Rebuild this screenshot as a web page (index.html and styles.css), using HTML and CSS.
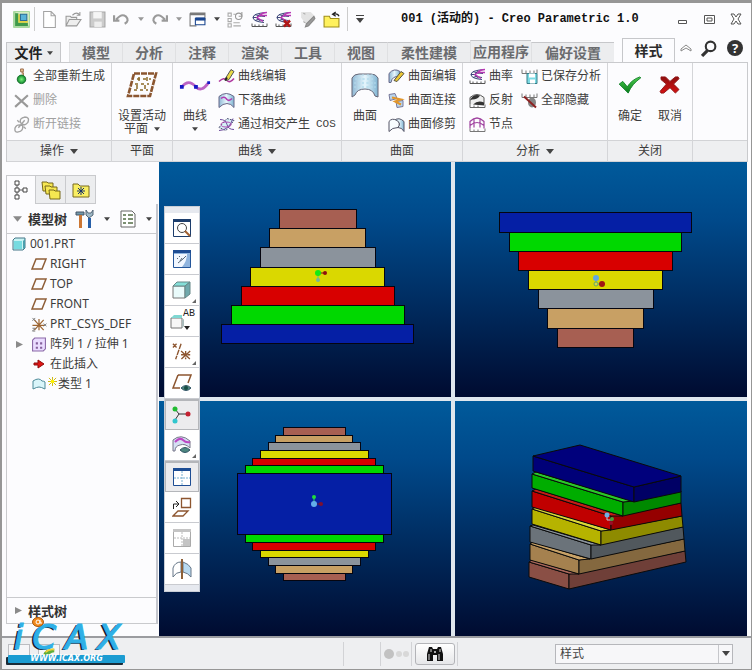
FILE: index.html
```html
<!DOCTYPE html>
<html lang="zh-CN">
<head>
<meta charset="utf-8">
<title>001 (活动的) - Creo Parametric 1.0</title>
<link rel="stylesheet" href="styles.css">
</head>
<body>
<svg class="defs" aria-hidden="true">
  <defs>
    <linearGradient id="surf" x1="0" x2="1"><stop offset="0" stop-color="#8fb8d4"/><stop offset=".5" stop-color="#e6f6fd"/><stop offset="1" stop-color="#7fb4d2"/></linearGradient>
    <linearGradient id="tick" x1="0" y1="0" x2="0" y2="1"><stop offset="0" stop-color="#4fd04f"/><stop offset="1" stop-color="#067a18"/></linearGradient>
    <linearGradient id="cross" x1="0" y1="0" x2="0" y2="1"><stop offset="0" stop-color="#8e0f0f"/><stop offset="1" stop-color="#d41212"/></linearGradient>
    <radialGradient id="ball"><stop offset="0" stop-color="#7df07d"/><stop offset="1" stop-color="#0d8a2c"/></radialGradient>
  </defs>
  <symbol id="down" viewBox="0 0 8 5"><path d="M0 0h8L4 5z" fill="currentColor"/></symbol>
  <symbol id="right" viewBox="0 0 8 8"><path d="M0 0v8l8-4z" fill="#8a8a8a"/></symbol>
  <symbol id="app" viewBox="0 0 16 16"><rect width="16" height="16" rx="1" fill="#a9d8a0"/><path d="M2 1h13v13z" fill="#d6edc0"/><path d="M2 2v12h12v-3H5V2z" fill="#3f9a4a"/><path d="M5 3v8h9V9H7V3z" fill="#e2d13e"/><path d="M7 3h6v6H7z" fill="#58b3d8" stroke="#2b6c96"/></symbol>
  <symbol id="new" viewBox="0 0 16 16"><path d="M2.500 .500h7l4 4v11h-11zM9.500.500v4h4" fill="#fff" stroke="#a3a3a3"/></symbol>
  <symbol id="open" viewBox="0 0 16 16"><path d="M1 14V5h4l1 1h5v2M1 14l3-6h11l-4 6z" fill="#eee" stroke="#999"/><path d="M7 4q4-4 7 0M14 1v3h-3" fill="none" stroke="#999"/></symbol>
  <symbol id="save" viewBox="0 0 16 16"><path d="M1 1h14v14H1z" fill="#ccc" stroke="#a5a5a5"/><path d="M4 1h8v6H4z" fill="#f5f5f5"/><path d="M5 10h7v5H5z" fill="#eee"/></symbol>
  <symbol id="undo" viewBox="0 0 16 12"><path d="M3 6q5-6 9-3 4 4-1 7M1 2v5h5" fill="none" stroke="#9a9a9a" stroke-width="2"/></symbol>
  <symbol id="redo" viewBox="0 0 16 12"><path d="M13 6Q8 0 4 3 0 7 5 10M15 2v5h-5" fill="none" stroke="#9a9a9a" stroke-width="2"/></symbol>
  <symbol id="windows" viewBox="0 0 16 14"><path d="M1 1h14v7M1 1v12h6" fill="none" stroke="#777"/><path d="M1 1h14v2H1z" fill="#777"/><path d="M6 6h9v6H6z" fill="#fff" stroke="#1a4690"/><path d="M6 5h9v3H6z" fill="#1a4690"/></symbol>
  <symbol id="list" viewBox="0 0 16 16"><path d="M1 2h3v3H1zM1 7h3v3H1zM1 12h3v3H1z" fill="none" stroke="#aaa"/><path d="M6 14h7M6 11h6M6 3h2" stroke="#aaa"/><circle cx="11" cy="5" r="3" fill="none" stroke="#999"/><path d="M14 1v4h-3" fill="none" stroke="#999"/></symbol>
  <symbol id="curv" viewBox="0 0 17 16"><path d="M15 1Q2 2 2 6t11 5M14 5Q7 4 6 6t7 3M9 2 6 6l3 4M2 6h4M4 3l3 1M4 9l3-1" fill="none" stroke="#3a4678"/><path d="M16 1Q11 1 9 4h7M9 4 6 6l6 4" fill="none" stroke="#b837b4" stroke-width="1.500"/><path d="M1 12v3h15v-3M4 13v2M8 13v2M12 13v2" fill="none" stroke="#555"/></symbol>
  <symbol id="curvx" viewBox="0 0 17 16"><use href="#curv"/><path d="m9 9 6 6m0-6-6 6" stroke="#b01616" stroke-width="2.500"/></symbol>
  <symbol id="edit" viewBox="0 0 16 16"><path d="M2 1h9l4 4v4L8 15 2 6z" fill="#e3e3e3"/><path d="m4 10 2 1M4 2l2 1" stroke="#aaa"/><path d="m14 5-7 7-1 3 3-1 6-7z" fill="#9c9c9c" stroke="#888"/></symbol>
  <symbol id="folder" viewBox="0 0 16 16"><path d="M1 5h5l1 2h8v8H1z" fill="#fff15d" stroke="#9e8d18"/><path d="M15 5q-1-3-5-2M12 1 9 3l3 2" fill="none" stroke="#222" stroke-width="1.200"/></symbol>
  <symbol id="search" viewBox="0 0 16 16"><circle cx="9" cy="6" r="4.500" fill="none" stroke="#333" stroke-width="2"/><path d="m6 10-5 5" stroke="#333" stroke-width="3"/></symbol>
  <symbol id="regen" viewBox="0 0 16 18"><path d="M7 1h3v3H7zM8 5h2v5" fill="#e9bb8d" stroke="#9a6d4c"/><circle cx="8" cy="12" r="4.500" fill="url(#ball)" stroke="#176c2c"/></symbol>
  <symbol id="del" viewBox="0 0 16 16"><path d="m2 3 12 11M14 3 2 14" stroke="#999" stroke-width="2"/></symbol>
  <symbol id="unlink" viewBox="0 0 16 16"><path d="M7 6q-1-4 4-5 5 0 3 5-3 4-6 1zM9 9q-5-2-7 2-1 5 3 4 5-1 4-6zM6 6 4 4M12 12l-2-2M11 4 5 11" fill="none" stroke="#a3a3a3" stroke-width="1.300"/></symbol>
  <symbol id="bigplane" viewBox="0 0 32 26"><path d="M8 1.500h22L24 24H2z" fill="none" stroke="#8b5630" stroke-width="2.600" stroke-dasharray="6 1"/><path d="M11 7h3m3 0h3m3 0h2M9 12h3m3 0h3m3 0h2M8 18h3m3 0h3m3 0h2M13 5v4m8-4v4m-10 4v4m8-4v4" stroke="#8b6a28" stroke-width="1.500"/></symbol>
  <symbol id="bigcurve" viewBox="0 0 34 12"><path d="M3 8q7-9 15 0 6 6 13-4" fill="none" stroke="#bb64c4" stroke-width="3"/><path d="M1 6h4v4H1zM16 6h4v4h-4zM30 2h3v3h-3z" fill="#1717c5"/></symbol>
  <symbol id="cedit" viewBox="0 0 17 16"><path d="M1 13q5-5 8-1 3 3 7-2" fill="none" stroke="#b03aa0" stroke-width="1.500"/><path d="m8 9 5-8 3 2-5 8-3 1z" fill="#eadb48" stroke="#555"/><path d="m7 12 2-3" stroke="#222" stroke-width="2"/></symbol>
  <symbol id="drop" viewBox="0 0 17 16"><path d="M1 15V4q7-6 15 0v11q-3-4-7-4t-8 4z" fill="url(#surf)" stroke="#668"/><path d="M3 6q3-3 6 1 2 2 5-1" fill="none" stroke="#b13bb1" stroke-width="1.600"/></symbol>
  <symbol id="cos" viewBox="0 0 17 16"><path d="m1 11 8-9 7 2-8 10z" fill="#d5f0f6" stroke="#557" stroke-dasharray="2 1"/><path d="M2 3q6 0 7 5t7 5M1 14q10 0 14-12" fill="none" stroke="#6d4c9c"/><ellipse cx="8" cy="8" rx="5" ry="2.500" fill="none" stroke="#b04ab4"/></symbol>
  <symbol id="bigsurf" viewBox="0 0 28 26"><path d="M1 25V6q2-4 7-4h12q5 0 7 4v19l-3-1q-2-7-10-7T4 23z" fill="url(#surf)" stroke="#667"/><path d="M4 7h20M3 11h22M3 15h22M8 3v14m4-15v14m5-14v14m4-14v15" stroke="#b5dced" stroke-dasharray="2 2"/></symbol>
  <symbol id="sedit" viewBox="0 0 17 16"><path d="M1 14V5q5-6 11-2v5q-8-1-9 6z" fill="url(#surf)" stroke="#668"/><path d="m6 12 7-9 3 2-7 8z" fill="#ecc734" stroke="#554"/></symbol>
  <symbol id="sjoin" viewBox="0 0 17 16"><path d="m1 2 6-1 2 5-7 2zM8 9l7-1v6l-6 1z" fill="#b9d5ed" stroke="#779"/><path d="m4 5 9 2-6 2 6 3" fill="none" stroke="#e1962c" stroke-width="2"/></symbol>
  <symbol id="strim" viewBox="0 0 17 16"><path d="M6 4q5-4 10 1v10q-2-4-6-4 3-4 0-6-2-2-4-1z" fill="url(#surf)" stroke="#556"/><path d="M1 15V5q3-4 8-1 4 3 1 7-6 0-9 4z" fill="#f8fcff" stroke="#556"/></symbol>
  <symbol id="reflect" viewBox="0 0 17 16"><path d="M1 12V5q7-6 14 0v7" fill="#eee" stroke="#555"/><path d="M1 8q3-7 10-5-2 4-8 4zM4 12q5-5 11-2v3z" fill="#333"/><path d="M1 12v3h15v-3M5 13v2m4-2v2" fill="none" stroke="#666"/></symbol>
  <symbol id="knot" viewBox="0 0 17 16"><path d="M1 12V5q7-7 14 0v7M1 9q7-6 14 0M5 3v8m6-8v8" fill="none" stroke="#a044a0" stroke-width="1.200"/><path d="M1 12v3h15v-3M5 13v2m4-2v2" fill="none" stroke="#777"/></symbol>
  <symbol id="saved" viewBox="0 0 17 16"><path d="M1 1v4h15V1M5 2v3m4-3v3m4-3v3" fill="none" stroke="#777"/><path d="M6 5h10v10H6z" fill="#7cdbe4" stroke="#377d88"/><path d="M8 5h6v4H8zM9 11h5v4H9z" fill="#fff"/></symbol>
  <symbol id="hide" viewBox="0 0 17 16"><path d="M1 1v4h15V1M5 2v3m4-3v3m4-3v3" fill="none" stroke="#777"/><ellipse cx="11" cy="10" rx="4" ry="5" fill="#858585"/><path d="m3 4 12 11" stroke="#8c2222" stroke-width="2"/></symbol>
  <symbol id="ok" viewBox="0 0 26 20"><path d="m1 9 4-3 5 6Q15 4 24 1l1 1Q15 9 11 19z" fill="url(#tick)" stroke="#0c7d24"/></symbol>
  <symbol id="cancel" viewBox="0 0 24 20"><path d="M2 1h5l5 5 6-5h3l1 2-6 6 6 6-4 4-6-6-7 6H2l-1-2 7-8-6-5z" fill="url(#cross)" stroke="#8c1010"/></symbol>
  <symbol id="t-tree" viewBox="0 0 14 20"><path d="M3 5v10M5 10h4" stroke="#555"/><path d="M1 1h4v4H1zM1 8h4v4H1zM1 15h4v4H1zM9 8h4v4H9z" fill="#fff" stroke="#444"/></symbol>
  <symbol id="t-folders" viewBox="0 0 20 20"><g fill="#f6e751" stroke="#77681a"><path d="M1 2h5l1 1h5v8H2z"/><path d="M4 6h5l1 1h6v7H5z"/><path d="M8 10h5l1 1h5v8H9z"/></g></symbol>
  <symbol id="t-star" viewBox="0 0 18 16"><path d="M1 2h5l2 2h9v11H1z" fill="#f9ee62" stroke="#786a1e"/><path d="M9 5v8M5 9h8M6 6l6 6m0-6-6 6" stroke="#17326a"/></symbol>
  <symbol id="tools" viewBox="0 0 20 20"><path d="M1 3h8v3H1z" fill="#7399aa" stroke="#456"/><path d="M4 6h3v13H4z" fill="#cc7734"/><path d="M11 1v5l3 3 4-3V1l-2 3h-3z" fill="#9eb9c6" stroke="#567"/><path d="M13 9h3v10h-3z" fill="#275fa8"/></symbol>
  <symbol id="settings" viewBox="0 0 16 18"><path d="M1 1h11l3 3v13H1z" fill="#fff" stroke="#666"/><path d="M3 5h3m2 0h5M3 9h3m2 0h5M3 13h3m2 0h5" stroke="#536e45" stroke-width="1.500"/></symbol>
  <symbol id="cube" viewBox="0 0 14 14"><path d="m1 3 2-2h10v10l-2 2H1z" fill="#c9f4f4" stroke="#478"/><path d="M2 4h8v8H2z" fill="#76dbe0"/><path d="m11 4 2-2v9l-2 1z" fill="#4b9fad"/></symbol>
  <symbol id="plane" viewBox="0 0 16 12"><path d="M5 1h10l-4 10H1z" fill="none" stroke="#8e5e37" stroke-width="1.500"/></symbol>
  <symbol id="csys" viewBox="0 0 16 16"><path d="M8 2v12M1 9h13M3 3l10 11M13 3 3 14" stroke="#9d6532" stroke-width="1.300"/><path d="m1 1 3 3m0-3L1 4m12 3 3 3m0-3-3 3M1 12h3l-3 3h3" fill="none" stroke="#777"/></symbol>
  <symbol id="pattern" viewBox="0 0 14 14"><path d="m1 3 2-2h10v10l-2 2H1z" fill="#eadcff" stroke="#8a68a7"/><path d="M4 5h2v2H4zM8 5h2v2H8zM4 9h2v2H4zM8 9h2v2H8z" fill="#85609d"/></symbol>
  <symbol id="insert" viewBox="0 0 12 12"><path d="M1 5h4V2l6 4-6 4V7H1z" fill="#e01414" stroke="#8f0c0c"/></symbol>
  <symbol id="style" viewBox="0 0 14 12"><path d="M1 11V3q6-4 9 0 2 0 3 1v7q-4-2-6-2t-6 2z" fill="#d9f5fa" stroke="#4d8a98"/></symbol>
  <symbol id="v-zoom" viewBox="0 0 20 20"><path d="M1.500 1.500h17v17h-17z" fill="#fff" stroke="#1c3d6c"/><path d="M1 1h18v3H1z" fill="#1c3d6c"/><circle cx="10" cy="10" r="4.500" fill="#fff" stroke="#444"/><path d="m13 13 5 5" stroke="#a16030" stroke-width="2"/></symbol>
  <symbol id="v-repaint" viewBox="0 0 20 20"><path d="M1.500 1.500h17v17h-17z" fill="#8fb4de" stroke="#24569a"/><path d="M1 1h18v3H1z" fill="#1d4d94"/><path d="M2 5h13q0 7-5 13H2z" fill="#f1f7ff"/><path d="m5 9 1 1m1-3 1 1m-2 6 5-4 3-3M8 12l2-3" fill="none" stroke="#567"/></symbol>
  <symbol id="v-cube" viewBox="0 0 20 20"><path d="M1 6h12v12H1z" fill="#e9fbfb" stroke="#777"/><path d="m1 6 4-4h13l-5 4z" fill="#85dfd8" stroke="#688"/><path d="m13 6 5-4v12l-5 4z" fill="#6fa9ac" stroke="#688"/></symbol>
  <symbol id="v-ab" viewBox="0 0 24 20"><path d="M1 7h11v10H1z" fill="#f7f7f7" stroke="#777"/><path d="m1 7 3-3h8v3z" fill="#7fd7d2"/><path d="m12 9 2-1v7l-2 2" fill="#abb"/><path d="M14 15h6l-3 4z" fill="#222"/></symbol>
  <symbol id="v-datum" viewBox="0 0 22 20"><path d="m1 1 4 4m0-4L1 5m9-4L4 18M10 9l10 9m0-9-10 9m5-9v9m-5-5h10" stroke="#8d5630" stroke-width="1.500" stroke-dasharray="6 1"/></symbol>
  <symbol id="v-plane" viewBox="0 0 20 20"><path d="M6 2h13l-3 8M6 2 1 15h7" fill="none" stroke="#8d5630" stroke-width="1.500"/><path d="M9 15q5-5 10 0-5 5-10 0z" fill="#4d8780" stroke="#356"/><circle cx="14" cy="15" r="2" fill="#184d43"/></symbol>
  <symbol id="v-spin" viewBox="0 0 20 20"><path d="m3 4 4 5-4 6m4-6h8" fill="none" stroke="#333"/><circle cx="3" cy="4" r="2.500" fill="#21bb31"/><circle cx="3" cy="16" r="2.500" fill="#30c6ce"/><circle cx="16" cy="9" r="2.500" fill="#c42131"/></symbol>
  <symbol id="v-curve" viewBox="0 0 20 20"><path d="M1 16V5q8-7 17 1v7q-5-5-10-3-5 1-5 6z" fill="#d5dff3" stroke="#778"/><path d="M3 7q5-5 8-2t7 2" fill="none" stroke="#bc46c4" stroke-width="2"/><path d="M8 15q5-5 10 0-5 5-10 0z" fill="#4d8780" stroke="#356"/></symbol>
  <symbol id="v-grid" viewBox="0 0 20 20"><path d="M1.500 1.500h17v17h-17z" fill="#fff" stroke="#1d4d94"/><path d="M1 1h18v3H1z" fill="#1d4d94"/><path d="M10 4v14M2 11h16" stroke="#76aed0" stroke-dasharray="2 1"/></symbol>
  <symbol id="v-orient" viewBox="0 0 20 20"><path d="M9.500 1.500h9v9h-9zM6 14h10l-5 5H1z" fill="none" stroke="#8d5630" stroke-width="1.300"/><path d="M1.500 12V7h5M4 4l3 3-3 3" fill="none" stroke="#222"/></symbol>
  <symbol id="v-gray" viewBox="0 0 20 20"><path d="M1.500 1.500h17v17h-17z" fill="#fff" stroke="#aaa"/><path d="M1 1h18v3H1zM11 11h7v7h-7z" fill="#c4c4c4"/><path d="M10 4v14M2 10h16" stroke="#bbb" stroke-dasharray="2 1"/></symbol>
  <symbol id="v-sym" viewBox="0 0 20 20"><path d="M9 3Q3 3 1 9v9q3-5 8-5z" fill="#fff" stroke="#678"/><path d="M11 3q6 2 8 6v9q-3-4-8-5z" fill="#b9daf0" stroke="#678"/><path d="M10 0v20" stroke="#8d6038" stroke-width="2"/></symbol>
</svg>

<div class="window">
  <header class="titlebar">
    <div class="quick">
      <button class="tool" aria-label="应用程序菜单"><svg class="i16"><use href="#app"/></svg></button>
      <span class="rule first"></span>
      <button class="tool" aria-label="新建"><svg class="i16"><use href="#new"/></svg></button>
      <button class="tool" aria-label="打开"><svg class="i16"><use href="#open"/></svg></button>
      <button class="tool" aria-label="保存"><svg class="i16"><use href="#save"/></svg></button>
      <button class="tool" aria-label="撤消"><svg class="i16"><use href="#undo"/></svg></button>
      <button class="tool more dim" aria-label="撤消列表"><svg class="tri"><use href="#down"/></svg></button>
      <button class="tool" aria-label="重做"><svg class="i16"><use href="#redo"/></svg></button>
      <button class="tool more dim" aria-label="重做列表"><svg class="tri"><use href="#down"/></svg></button>
      <button class="tool" aria-label="窗口"><svg class="i16"><use href="#windows"/></svg></button>
      <button class="tool more" aria-label="窗口列表"><svg class="tri"><use href="#down"/></svg></button>
      <button class="tool" aria-label="重新生成"><svg class="i16"><use href="#list"/></svg></button>
      <button class="tool" aria-label="曲率"><svg class="i16"><use href="#curv"/></svg></button>
      <button class="tool" aria-label="删除曲率"><svg class="i16"><use href="#curvx"/></svg></button>
      <button class="tool" aria-label="编辑"><svg class="i16"><use href="#edit"/></svg></button>
      <button class="tool" aria-label="工作目录"><svg class="i16"><use href="#folder"/></svg></button>
      <span class="rule"></span>
      <button class="tool" aria-label="自定义"><svg class="cust" viewBox="0 0 10 8"><path d="M1 0h8v1H1zM1 3h8L5 8z" fill="#444"/></svg></button>
    </div>
    <h1 class="title">001 (活动的) - Creo Parametric 1.0</h1>
    <div class="winctl">
      <button class="tool" aria-label="最小化"><svg viewBox="0 0 12 12"><path d="M2.500 7.500h8v3h-8z" fill="#fff" stroke="#555"/></svg></button>
      <button class="tool" aria-label="最大化"><svg viewBox="0 0 12 12"><path d="M1.500 2.500h10v8h-10zM4 5h5v3H4z" fill="#fff" stroke="#555"/></svg></button>
      <button class="tool" aria-label="关闭"><svg viewBox="0 0 12 12"><path d="M1 1h3l2 3 2-3h3L8 6l3 5H8L6 8l-2 3H1l3-5z" fill="#fff" stroke="#555"/></svg></button>
    </div>
  </header>

  <nav class="tabs">
    <button class="tab file">文件<svg class="tri"><use href="#down"/></svg></button>
    <button class="tab">模型</button>
    <button class="tab">分析</button>
    <button class="tab">注释</button>
    <button class="tab">渲染</button>
    <button class="tab">工具</button>
    <button class="tab">视图</button>
    <button class="tab wide">柔性建模</button>
    <button class="tab tight">应用程序</button>
    <button class="tab wide">偏好设置</button>
    <button class="tab active">样式</button>
    <div class="tabtools">
      <button class="tool" aria-label="最小化功能区"><svg class="chev" viewBox="0 0 12 8"><path d="m1 5 5-4 5 4v2L6 4 1 7z" fill="#fff" stroke="#888"/></svg></button>
      <button class="tool" aria-label="搜索"><svg class="i16"><use href="#search"/></svg></button>
      <button class="help" aria-label="帮助">?</button>
    </div>
  </nav>

  <section class="ribbon">
    <div class="group g-ops">
      <div class="body">
        <div class="stack">
          <button class="cmd"><svg class="i16"><use href="#regen"/></svg>全部重新生成</button>
          <button class="cmd off"><svg class="i16"><use href="#del"/></svg>删除</button>
          <button class="cmd off"><svg class="i16"><use href="#unlink"/></svg>断开链接</button>
        </div>
      </div>
      <button class="foot">操作<svg class="tri"><use href="#down"/></svg></button>
    </div>
    <div class="group g-plane">
      <div class="body">
        <button class="big"><svg class="i32"><use href="#bigplane"/></svg><span>设置活动</span><span>平面<svg class="tri sm"><use href="#down"/></svg></span></button>
      </div>
      <div class="foot">平面</div>
    </div>
    <div class="group g-curve">
      <div class="body">
        <button class="big"><svg class="i32"><use href="#bigcurve"/></svg><span>曲线</span><span><svg class="tri sm"><use href="#down"/></svg></span></button>
        <div class="stack">
          <button class="cmd"><svg class="i16"><use href="#cedit"/></svg>曲线编辑</button>
          <button class="cmd"><svg class="i16"><use href="#drop"/></svg>下落曲线</button>
          <button class="cmd"><svg class="i16"><use href="#cos"/></svg>通过相交产生 <span class="mono">COS</span></button>
        </div>
      </div>
      <button class="foot">曲线<svg class="tri"><use href="#down"/></svg></button>
    </div>
    <div class="group g-surf">
      <div class="body">
        <button class="big"><svg class="i32"><use href="#bigsurf"/></svg><span>曲面</span></button>
        <div class="stack">
          <button class="cmd"><svg class="i16"><use href="#sedit"/></svg>曲面编辑</button>
          <button class="cmd"><svg class="i16"><use href="#sjoin"/></svg>曲面连接</button>
          <button class="cmd"><svg class="i16"><use href="#strim"/></svg>曲面修剪</button>
        </div>
      </div>
      <div class="foot">曲面</div>
    </div>
    <div class="group g-ana">
      <div class="body">
        <div class="stack">
          <button class="cmd"><svg class="i16"><use href="#curv"/></svg>曲率</button>
          <button class="cmd"><svg class="i16"><use href="#reflect"/></svg>反射</button>
          <button class="cmd"><svg class="i16"><use href="#knot"/></svg>节点</button>
        </div>
        <div class="stack">
          <button class="cmd"><svg class="i16"><use href="#saved"/></svg>已保存分析</button>
          <button class="cmd"><svg class="i16"><use href="#hide"/></svg>全部隐藏</button>
        </div>
      </div>
      <button class="foot">分析<svg class="tri"><use href="#down"/></svg></button>
    </div>
    <div class="group g-close">
      <div class="body">
        <button class="big"><svg class="i24"><use href="#ok"/></svg><span>确定</span></button>
        <button class="big"><svg class="i24"><use href="#cancel"/></svg><span>取消</span></button>
      </div>
      <div class="foot">关闭</div>
    </div>
    <div class="group rest"><div class="body"></div><div class="foot"></div></div>
  </section>

  <main class="work">
    <aside class="side">
      <div class="sidetabs">
        <button class="sidetab on" aria-label="模型树"><svg class="s-tree"><use href="#t-tree"/></svg></button>
        <button class="sidetab" aria-label="文件夹浏览器"><svg class="s-20"><use href="#t-folders"/></svg></button>
        <button class="sidetab" aria-label="收藏夹"><svg class="s-18"><use href="#t-star"/></svg></button>
      </div>
      <div class="panel">
        <div class="head">
          <svg class="fold"><use href="#down"/></svg><h2>模型树</h2>
          <button class="tool" aria-label="设置"><svg class="s-20"><use href="#tools"/></svg></button>
          <button class="tool" aria-label="设置列表"><svg class="tri sm"><use href="#down"/></svg></button>
          <button class="tool" aria-label="显示"><svg class="s-18"><use href="#settings"/></svg></button>
          <button class="tool" aria-label="显示列表"><svg class="tri sm"><use href="#down"/></svg></button>
        </div>
        <ul class="tree">
          <li class="root"><svg class="s-14"><use href="#cube"/></svg>001.PRT</li>
          <li><svg class="i16"><use href="#plane"/></svg>RIGHT</li>
          <li><svg class="i16"><use href="#plane"/></svg>TOP</li>
          <li><svg class="i16"><use href="#plane"/></svg>FRONT</li>
          <li><svg class="i16 tall"><use href="#csys"/></svg>PRT_CSYS_DEF</li>
          <li class="branch"><svg class="arrow"><use href="#right"/></svg><svg class="i16"><use href="#pattern"/></svg>阵列 1 / 拉伸 1</li>
          <li><svg class="i16"><use href="#insert"/></svg>在此插入</li>
          <li><svg class="i16"><use href="#style"/></svg><svg class="star" viewBox="0 0 10 10"><path d="M5 0v10M0 5h10M1 1l8 8m0-8L1 9" stroke="#c9b300"/><circle cx="5" cy="5" r="2" fill="#fff200"/></svg>类型 1</li>
        </ul>
        <div class="head foothead"><svg class="arrow"><use href="#right"/></svg><h2>样式树</h2></div>
      </div>
    </aside>

    <div class="views">
      <div class="view">
        <svg class="model" viewBox="159 162 292 235">
          <g class="solid">
            <path class="brown" d="M279.500 209.500h77v19h-77z"/><path class="tan" d="M269.500 228.500h96v19h-96z"/><path class="gray" d="M260.500 247.500h115v20h-115z"/><path class="yellow" d="M250.500 267.500h134v19h-134z"/><path class="red" d="M241.500 286.500h153v19h-153z"/><path class="green" d="M231.500 305.500h173v19h-173z"/><path class="blue" d="M221.500 324.500h192v19h-192z"/>
          </g>
          <path d="M318 273h7" stroke="#711"/><path d="M318 273v6" stroke="#59c080"/><circle cx="318" cy="273" r="3" fill="#13ea13"/><circle cx="325" cy="273" r="2" fill="#8c1010"/><circle cx="318" cy="280" r="2" fill="#74b49c"/>
        </svg>
      </div>
      <div class="view">
        <svg class="model" viewBox="455 162 292 235">
          <g class="solid">
            <path class="blue" d="M499.500 212.500h192v20h-192z"/><path class="green" d="M509.500 232.500h172v19h-172z"/><path class="red" d="M518.500 251.500h154v19h-154z"/><path class="yellow" d="M528.500 270.500h134v19h-134z"/><path class="gray" d="M538.500 289.500h115v19h-115z"/><path class="tan" d="M547.500 308.500h96v20h-96z"/><path class="brown" d="M557.500 328.500h76v19h-76z"/>
          </g>
          <path d="M596 278v6h6" fill="none" stroke="#5a9"/><circle cx="596" cy="278" r="3" fill="#62a8e0"/><circle cx="596" cy="284" r="2" fill="#ddd83a" stroke="#6a6"/><circle cx="602" cy="284" r="3" fill="#a01414"/>
        </svg>
      </div>
      <div class="view">
        <svg class="model" viewBox="159 401 292 235">
          <g class="solid">
            <path class="brown" d="M283.500 427.500h62v8h-62zM283.500 573.500h62v7h-62z"/><path class="tan" d="M275.500 435.500h77v7h-77zM275.500 565.500h77v8h-77z"/><path class="gray" d="M268.500 442.500h92v8h-92zM268.500 557.500h92v8h-92z"/><path class="yellow" d="M260.500 450.500h108v8h-108zM260.500 550.500h108v7h-108z"/><path class="red" d="M252.500 458.500h123v7h-123zM252.500 542.500h123v8h-123z"/><path class="green" d="M245.500 465.500h138v8h-138zM245.500 534.500h138v8h-138z"/><path class="blue" d="M237.500 473.500h154v61h-154z"/>
          </g>
          <path d="M314 504v-7" stroke="#3ddc70"/><path d="M314 504h7" stroke="#711530"/><circle cx="314" cy="504" r="3" fill="#62aeea"/><circle cx="314" cy="497" r="2" fill="#1fdc3c"/><circle cx="321" cy="504" r="2" fill="#7c1030"/>
        </svg>
      </div>
      <div class="view">
        <svg class="model" viewBox="455 401 292 235">
          <g class="iso">
            <path fill="#8a4f45" d="m529 562 40 12v15l-40-12z"/><path fill="#6f3f38" d="m569 574 116-23 1 11-117 27z"/><path fill="#a8665a" d="m529 562 3-2 47 14h-10z"/>
            <path fill="#a5814f" d="m530 544 49 16v14l-49-14z"/><path fill="#84683f" d="m579 560 105-21 1 12-106 23z"/><path fill="#c8a267" d="m530 544 3-2 57 17-11 1z"/>
            <path fill="#6b737a" d="m530 526 61 19v14l-61-17z"/><path fill="#51585d" d="m591 545 92-18 1 12-93 20z"/><path fill="#8b949b" d="m530 526 3-1 68 20h-10z"/>
            <path fill="#b6b300" d="m532 509 69 22v14l-69-21z"/><path fill="#8e8b00" d="m601 531 81-15 1 11-82 18z"/><path fill="#dad838" d="m532 509 4-2 75 23-10 1z"/>
            <path fill="#c00000" d="m532 491 79 25v14l-79-23z"/><path fill="#950000" d="m611 516 70-13 1 13-71 14z"/><path fill="#c21c16" d="m532 491 4-2 87 27h-12z"/>
            <path fill="#00ad00" d="m532 474 91 28v14l-91-28z"/><path fill="#008900" d="m623 502 58-11v12l-58 13z"/><path fill="#2ac82a" d="m532 474 4-2 98 29-11 1z"/>
            <path fill="#000078" d="m533 456 101 31v15l-101-31z"/><path fill="#000065" d="m634 487 47-11v16l-47 10z"/><path fill="#00007c" d="m533 456 47-11 101 31-47 11z"/>
          </g>
          <path d="M607 515v5h5" fill="none" stroke="#bcd"/><circle cx="607" cy="515" r="2.500" fill="#72aee6"/><circle cx="612" cy="519" r="2" fill="#49a13a"/><circle cx="611" cy="523" r="2" fill="#9a102a"/>
        </svg>
      </div>

      <div class="viewbar">
        <button aria-label="缩放"><svg><use href="#v-zoom"/></svg></button>
        <button aria-label="重画"><svg><use href="#v-repaint"/></svg></button>
        <button class="sub" aria-label="显示样式"><svg><use href="#v-cube"/></svg></button>
        <button aria-label="已命名视图"><svg class="wideicon"><use href="#v-ab"/></svg><span class="ab">AB</span></button>
        <button class="sub" aria-label="基准显示"><svg><use href="#v-datum"/></svg></button>
        <button aria-label="平面显示"><svg><use href="#v-plane"/></svg></button>
        <button class="pressed" aria-label="旋转中心"><svg><use href="#v-spin"/></svg></button>
        <button class="sub" aria-label="曲线显示"><svg><use href="#v-curve"/></svg></button>
        <button class="pressed" aria-label="全部视图"><svg><use href="#v-grid"/></svg></button>
        <button aria-label="活动平面方向"><svg><use href="#v-orient"/></svg></button>
        <button aria-label="下一视图"><svg><use href="#v-gray"/></svg></button>
        <button aria-label="对称"><svg><use href="#v-sym"/></svg></button>
      </div>
    </div>
  </main>

  <footer class="status">
    <div class="toggles">
      <button aria-label="导航器"><svg viewBox="0 0 16 16"><path d="M2 11h4v4H2zM10 11h4v4h-4zM6 13h4" fill="none" stroke="#234"/></svg></button>
      <button aria-label="浏览器"><svg viewBox="0 0 16 16"><path d="M1 9q3-8 13-7v4Q8 6 6 14z" fill="#5fae3c"/><path d="M4 6q4-4 10-3" fill="none" stroke="#f1d03a" stroke-width="2"/></svg></button>
    </div>
    <div class="logo">
      <svg class="ball" viewBox="0 0 12 10"><ellipse cx="6" cy="5" rx="5.500" ry="4.500" fill="#f28a1e" stroke="#a75a12"/><circle cx="6" cy="5" r="2" fill="none" stroke="#fff"/><path d="M8 3v3h2" fill="none" stroke="#fff"/></svg>
      <div class="name"><span>i</span><span>C</span><span>A</span><span>X</span></div>
      <div class="site">WWW.ICAX.ORG</div>
    </div>
    <span class="cell"></span>
    <span class="cell lights"><svg viewBox="0 0 26 12"><circle cx="6" cy="6" r="5" fill="#c2c2c2"/><circle cx="16" cy="6" r="3" fill="#d8d8d8"/><circle cx="23" cy="6" r="3" fill="#d8d8d8"/></svg></span>
    <span class="cell findcell"><button class="find" aria-label="查找"><svg viewBox="0 0 18 16"><path d="M3 1h3l1 2h4l1-2h3l2 7v7h-6V9H7v6H1V8z" fill="#111"/><path d="M3 8v6M13 8v6M5 3v3M14 3v3" stroke="#ddd"/><path d="M8 5h2v2H8z" fill="#aaa"/></svg></button></span>
    <span class="cell filter">
      <label class="pick"><select aria-label="选择过滤器"><option>样式</option></select><span class="box"><svg class="tri"><use href="#down"/></svg></span></label>
    </span>
  </footer>
</div>
</body>
</html>
```
FILE: styles.css
```css
* { box-sizing: border-box; }
body {
  margin: 0;
  font: 12px/16px "Noto Sans", "Noto Sans CJK SC", sans-serif;
  color: #3c3c3c;
  background: #fcfcfe;
}
button { margin: 0; padding: 0; border: 0; background: none; font: inherit; color: inherit; }
svg { display: block; flex: none; }
h1, h2 { margin: 0; font-size: 12px; }
.defs { position: absolute; width: 0; height: 0; }

.window {
  display: flex;
  flex-direction: column;
  min-height: 100vh;
  border: 1px solid #969696;
  border-width: 3px 1px 1px 2px;
}
.i16 { width: 17px; height: 17px; }
.i24 { width: 24px; height: 20px; }
.i32 { width: 32px; height: 26px; }
.tri { width: 8px; height: 5px; color: #444; }
.tri.sm { width: 6px; height: 4px; }
.tool { display: flex; align-items: center; justify-content: center; }

/* title bar */
.titlebar { display: flex; align-items: center; height: 32px; padding: 0 9px 0 11px; }
.quick { display: flex; align-items: center; gap: 7px; }
.quick .more { width: 7px; }
.quick .more .tri { width: 6px; height: 4px; }
.quick .dim .tri { color: #999; }
.rule { width: 1px; height: 24px; background: #ccc; }
.rule.first { margin: 0 -1px 0 -3px; }
.cust { width: 10px; height: 8px; }
.title { flex: 1; padding-left: 36px; white-space: nowrap; color: #111; font: bold 12px/16px "Liberation Mono", "Noto Sans CJK SC", monospace; }
.winctl { display: flex; gap: 15px; }
.winctl svg { width: 12px; height: 12px; }

/* tab row */
.tabs { display: flex; align-items: flex-end; padding: 0 4px; height: 27px; }
.tab {
  display: flex; align-items: center; justify-content: center; gap: 4px;
  width: 53px; height: 20px;
  border: 1px solid #c6c7ca; border-width: 1px 0 0 1px;
  border-left-color: #dfe0e2;
  background: #ecedef;
  color: #6a6b6e; font-size: 14px; font-weight: bold; line-height: 18px; white-space: nowrap;
}
.tab .tri { width: 6px; height: 4px; }
.tab.file { width: 55px; margin-right: 8px; color: #222; border-width: 1px 1px 0; border-color: #c6c7ca; }
.tab.wide { width: 83px; }
.tab.tight { width: 61px; height: 22px; }
.tab.active { width: 53px; height: 24px; margin-left: 8px; border-width: 1px 1px 0; border-color: #c6c7ca; background: #fcfcfe; color: #2c2c2c; }
.tabtools { display: flex; align-items: center; gap: 9px; flex: 1; justify-content: flex-end; height: 24px; padding: 0 4px 4px 0; }
.chev { width: 12px; height: 8px; }
.help { width: 16px; height: 16px; border-radius: 8px; background: #333; color: #fff; font-weight: bold; font-size: 13px; line-height: 16px; }

/* ribbon */
.ribbon { display: flex; margin: 0 3px 0 4px; border: 1px solid #c9cacd; border-bottom: 0; }
.group { display: flex; flex-direction: column; border-right: 1px solid #d4d5d8; }
.group .body { display: flex; height: 77px; padding-top: 1px; }
.foot { display: flex; align-items: center; justify-content: center; gap: 6px; height: 22px; border-top: 1px solid #d2d3d6; border-bottom: 1px solid #d2d3d6; background: #eeeff1; }
.g-ops { flex: 0 0 105px; }
.g-plane { flex: 0 0 61px; }
.g-curve { flex: 0 0 169px; }
.g-surf { flex: 0 0 121px; }
.g-ana { flex: 0 0 145px; }
.g-close { flex: 0 0 85px; }
.rest { flex: 1; border-right: 0; }
.stack { display: flex; flex-direction: column; }
.cmd { display: flex; align-items: center; gap: 3px; height: 24px; white-space: nowrap; }
.off { color: #a0a0a0; }
.mono { margin-left: 3px; font-family: "Liberation Mono", monospace; font-size: 11px; }
.big { display: flex; flex-direction: column; align-items: center; line-height: 13px; white-space: nowrap; padding-top: 8px; }
.big > svg { margin-bottom: 11px; }
.big > .i24 { height: 18px; margin: 4px 0 15px; }
.big span { display: flex; align-items: center; gap: 6px; height: 13px; }
.g-ops .body { padding-left: 6px; }
.g-plane .body, .g-close .body { justify-content: center; }
.g-close .body { gap: 16px; }
.g-curve .body { padding-left: 6px; gap: 7px; }
.g-surf .body { padding-left: 7px; gap: 7px; }
.g-ana .body { padding-left: 6px; gap: 8px; }

/* work area */
.work { flex: 1; display: flex; padding-right: 4px; }
.side { flex: 0 0 157px; display: flex; flex-direction: column; padding: 13px 1px 12px 4px; }
.sidetabs { display: flex; }
.sidetab { display: flex; align-items: center; justify-content: center; width: 30px; height: 29px; border: 1px solid #c9cacd; border-left-width: 0; background: #ecedef; }
.sidetab.on { border-left-width: 1px; border-bottom: 0; background: #fcfcfe; }
.s-tree { width: 14px; height: 20px; }
.s-20 { width: 20px; height: 20px; }
.s-18 { width: 18px; height: 18px; }
.s-14 { width: 14px; height: 14px; }
.panel { flex: 1; display: flex; flex-direction: column; border: 1px solid #c9cacd; border-top: 0; border-right: 2px solid #c5c7ce; }
.head { display: flex; align-items: center; height: 30px; padding: 0 4px 0 6px; border-bottom: 1px solid #c9cacd; }
.head h2 { margin-left: 6px; margin-right: auto; font-size: 13px; color: #333; }
.head .tool + .tool { margin-left: 9px; }
.fold { width: 9px; height: 8px; color: #8a8a8a; }
.arrow { width: 7px; height: 9px; }
.tree { flex: 1; margin: 0; padding: 0; list-style: none; }
.tree li { display: flex; align-items: center; gap: 3px; height: 20px; padding-left: 24px; white-space: nowrap; }
.tree .root { padding-left: 5px; gap: 4px; }
.tree .branch { padding-left: 9px; }
.tree .branch .arrow { margin-right: 5px; }
.tree .i16 { width: 16px; height: 12px; }
.tree .tall, .tree .branch .i16 { height: 15px; }
.tree .star { width: 9px; height: 9px; margin: 0 -2px 6px -2px; }
.foothead { height: 26px; padding-left: 8px; border-top: 1px solid #c9cacd; border-bottom: 0; }

/* graphics */
.views { position: relative; flex: 1; display: grid; grid-template: 1fr 1fr / 1fr 1fr; gap: 4px; min-width: 0; background: #dfe7ee; }
.view { display: flex; min-height: 235px; background: linear-gradient(#005a9b, #00498a 25%, #000b30); }
.model { flex: 1; width: 100%; height: auto; min-width: 0; }
.solid { stroke: #05050f; shape-rendering: crispEdges; }
.iso { stroke: #0a0a0a; stroke-linejoin: round; }
.brown { fill: #a75f52; }
.tan { fill: #c8a064; }
.gray { fill: #8b939c; }
.yellow { fill: #dad800; }
.red { fill: #d80000; }
.green { fill: #00d800; }
.blue { fill: #051fa5; }
.viewbar { position: absolute; left: 5px; top: 44px; width: 36px; padding: 6px 0; background: #e6e9ef; border: 1px solid #c9ced6; }
.viewbar button { position: relative; display: flex; align-items: center; justify-content: center; width: 100%; height: 31px; border-bottom: 1px solid #c9cbd0; background: #fff; }
.viewbar svg { width: 20px; height: 20px; }
.viewbar .wideicon { width: 24px; height: 20px; }
.viewbar .pressed { border: 1px solid #b4b6ba; border-top-width: 2px; background: #ececee; }
.viewbar .sub::after { content: ""; position: absolute; right: 3px; bottom: 2px; border: solid transparent; border-width: 0 0 4px 4px; border-bottom-color: #666; }
.ab { position: absolute; right: 4px; top: 3px; font: 10px/10px "Liberation Mono", monospace; color: #222; }

/* status bar */
.status { position: relative; display: flex; align-items: center; justify-content: flex-end; height: 33px; border-top: 2px solid #9b9ca0; background: #eeeff1; }
.toggles { display: flex; gap: 8px; margin: 0 auto 0 6px; }
.toggles button { width: 22px; height: 20px; padding: 1px 3px; border: 1px solid #bcbdc1; background: #f6f6f8; }
.cell { display: flex; align-items: center; height: 24px; border-left: 1px solid #d2d3d6; width: 37px; }
.lights { width: 31px; justify-content: center; }
.lights svg { width: 26px; height: 12px; }
.findcell { width: 46px; justify-content: center; }
.find { display: flex; align-items: center; justify-content: center; width: 40px; height: 22px; border: 1px solid #b3b4b8; border-radius: 3px; background: linear-gradient(#fff, #e6e7e9); }
.find svg { width: 18px; height: 16px; }
.filter { width: 294px; justify-content: flex-end; padding-right: 18px; }
.pick { position: relative; display: block; width: 178px; height: 20px; }
.pick select { width: 100%; height: 100%; padding: 0 4px; appearance: none; border: 1px solid #b6b7bb; border-radius: 0; background: #f7f7f9; font: inherit; color: #444; }
.box { position: absolute; right: 1px; top: 1px; bottom: 1px; width: 14px; display: flex; align-items: center; justify-content: center; border-left: 1px solid #c6c7cb; pointer-events: none; }

/* brand mark overlapping the status bar */
.logo { position: absolute; left: 6px; bottom: 6px; width: 117px; }
.ball { position: absolute; left: 24px; top: -4px; width: 12px; height: 10px; }
.name { display: flex; justify-content: space-between; padding: 0 4px 0 6px; height: 34px; font: italic 34px/32px "DejaVu Sans", sans-serif; color: #2fb0e6; -webkit-text-stroke: 1px #2fb0e6; text-shadow: -2px 1px 0 #10222e; }
.site { height: 8px; border-radius: 1px; background: #1b9cd2; box-shadow: -2px 2px 0 #1a2c38; color: #fff; font: italic bold 8px/8px "DejaVu Sans", sans-serif; text-align: center; }
```
